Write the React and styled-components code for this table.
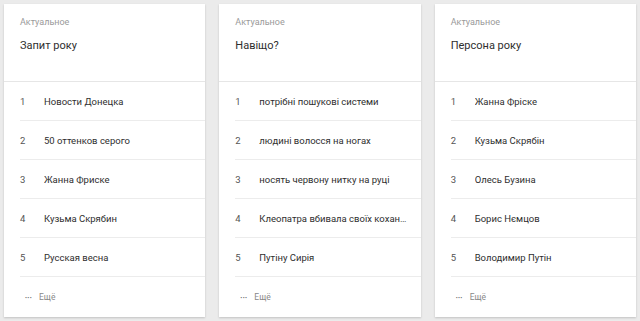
import styled, { createGlobalStyle } from 'styled-components';

const GlobalStyle = createGlobalStyle`
    html, body {
        margin: 0;
        padding: 0;
        background: #ebebeb;
    }
    body {
        font-family: Roboto, Arial, sans-serif;
    }
`;

const cards = [
    {
        title: 'Запит року',
        items: ['Новости Донецка', '50 оттенков серого', 'Жанна Фриске', 'Кузьма Скрябин', 'Русская весна'],
    },
    {
        title: 'Навіщо?',
        items: [
            'потрібні пошукові системи',
            'людині волосся на ногах',
            'носять червону нитку на руці',
            'Клеопатра вбивала своїх коханців',
            'Путіну Сирія',
        ],
    },
    {
        title: 'Персона року',
        items: ['Жанна Фріске', 'Кузьма Скрябін', 'Олесь Бузина', 'Борис Нємцов', 'Володимир Путін'],
    },
];

const App = () => {
    return (
        <>
            <GlobalStyle />
            <Page>
                {cards.map((card) => (
                    <Card key={card.title}>
                        <Header>
                            <Label>Актуальное</Label>
                            <Title>{card.title}</Title>
                        </Header>
                        <List>
                            {card.items.map((item, i) => (
                                <Row key={item}>
                                    <Num>{i + 1}</Num>
                                    <Text>{item}</Text>
                                </Row>
                            ))}
                        </List>
                        <More>
                            <Dots>•••</Dots>
                            <span>Ещё</span>
                        </More>
                    </Card>
                ))}
            </Page>
        </>
    );
};

const Page = styled.main`
    display: flex;
    gap: 14px;
    padding: 4px;
    height: 321px;
    box-sizing: border-box;
    align-items: flex-start;
`;

const Card = styled.section`
    flex: 1;
    min-width: 0;
    height: 313px;
    background: #fff;
    box-shadow: 0 1px 2px rgba(0, 0, 0, 0.18);
    display: flex;
    flex-direction: column;
`;

const Header = styled.header`
    height: 78px;
    box-sizing: border-box;
    padding: 12px 16px 0;
    border-bottom: 1px solid #e6e6e6;
`;

const Label = styled.div`
    font-size: 9px;
    color: #9a9a9a;
    line-height: 13px;
`;

const Title = styled.div`
    margin-top: 9px;
    font-size: 11px;
    color: #2e2e2e;
    line-height: 16px;
`;

const List = styled.ol`
    list-style: none;
    margin: 0;
    padding: 0 0 0 16px;
`;

const Row = styled.li`
    display: flex;
    align-items: center;
    height: 39px;
    box-sizing: border-box;
    border-bottom: 1px solid #ececec;
    font-size: 9.5px;
    color: #2e2e2e;
`;

const Num = styled.span`
    width: 24px;
    flex-shrink: 0;
    color: #555;
`;

const Text = styled.span`
    flex: 1;
    min-width: 0;
    padding-right: 12px;
    white-space: nowrap;
    overflow: hidden;
    text-overflow: ellipsis;
`;

const More = styled.div`
    flex: 1;
    display: flex;
    align-items: center;
    gap: 7px;
    padding-left: 21px;
    font-size: 8.5px;
    color: #888;
`;

const Dots = styled.span`
    font-size: 6px;
    letter-spacing: 0.3px;
    color: #666;
`;

export default App;
